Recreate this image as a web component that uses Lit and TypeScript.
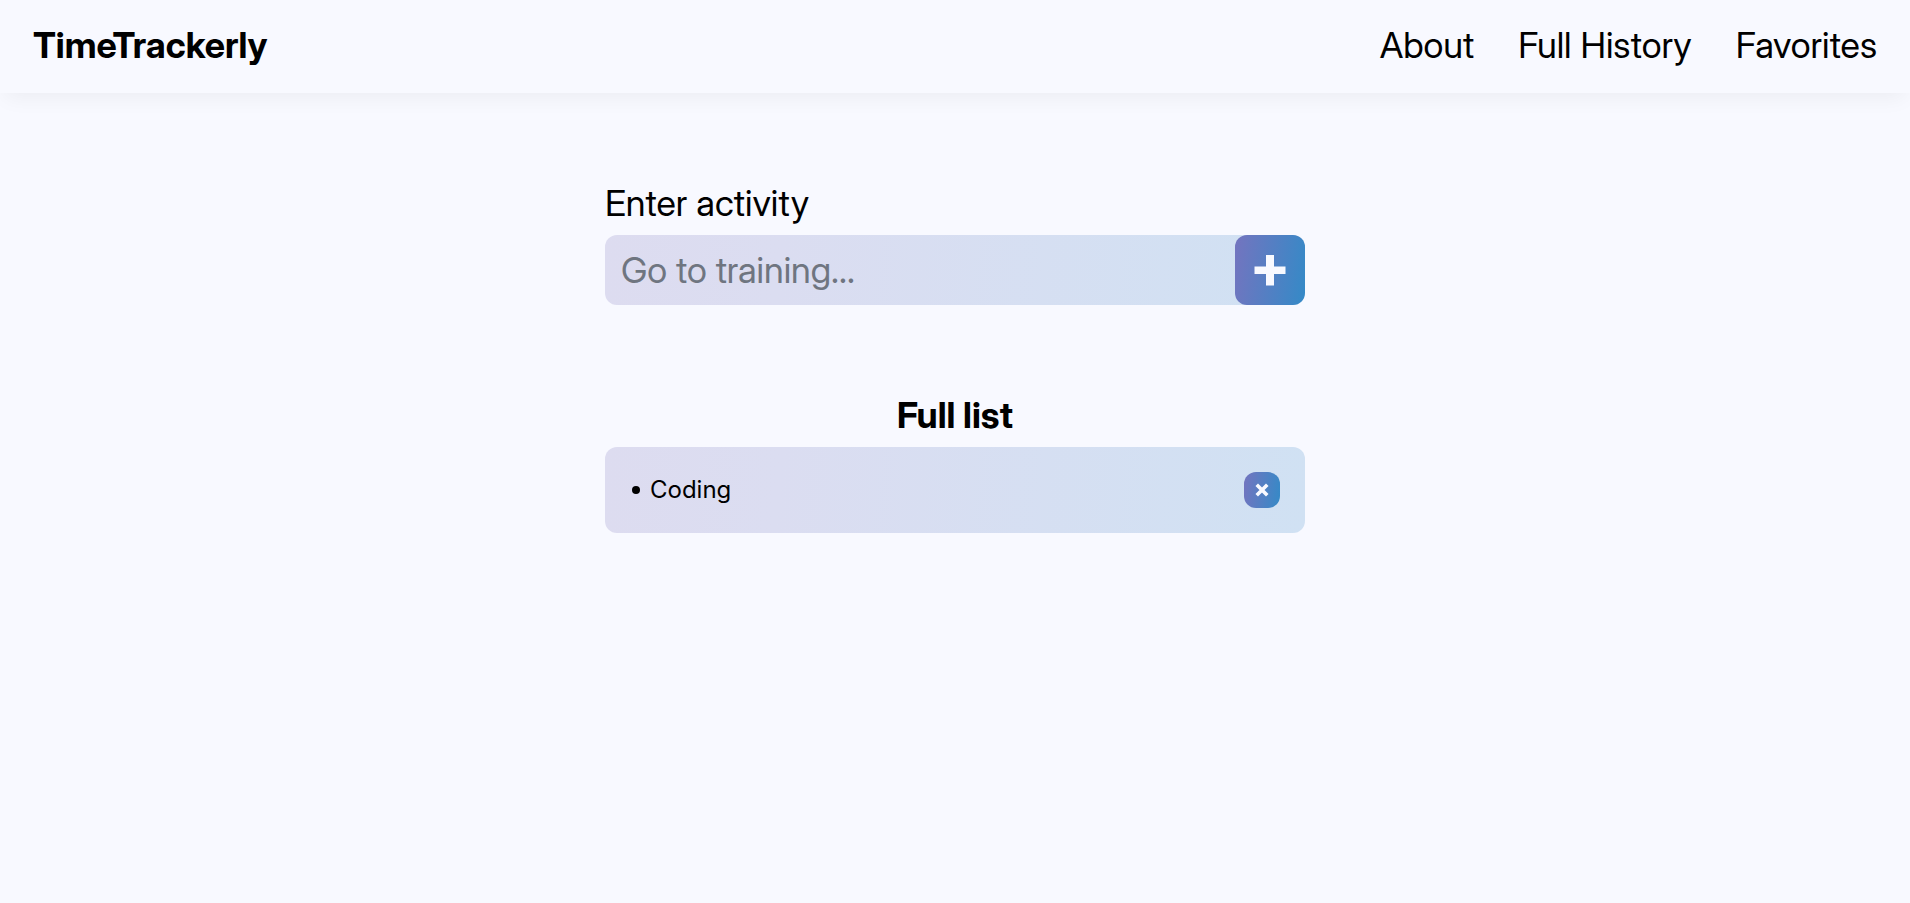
import { LitElement, html, css } from "lit";
import { customElement, state } from "lit/decorators.js";

@customElement("app-root")
export class AppRoot extends LitElement {
  static styles = css`
    :host {
      display: block;
      min-height: 100vh;
      background: #f8f9ff;
      color: #000;
      font-family: "Inter Display", Inter, "Liberation Sans", sans-serif;
      font-size: 36px;
      line-height: 45px;
    }
    * {
      box-sizing: border-box;
    }
    .header {
      display: flex;
      align-items: center;
      justify-content: space-between;
      padding: 23px 33px 25px;
      box-shadow: 0 10px 20px -5px rgba(0, 0, 0, 0.05);
    }
    .logo {
      font-weight: 700;
      color: inherit;
      text-decoration: none;
    }
    .nav {
      display: flex;
      gap: 44px;
    }
    .nav a {
      color: inherit;
      text-decoration: none;
    }
    .main {
      width: 100%;
      max-width: 700px;
      margin: 0 auto;
      padding-top: 88px;
    }
    .label {
      display: block;
      padding-bottom: 9px;
    }
    .field {
      display: flex;
      height: 70px;
      border-radius: 12px;
      background: linear-gradient(95deg, #dddcf0, #dbddf1 25%, #d0e1f3);
    }
    .input {
      flex: 1;
      min-width: 0;
      border: 0;
      padding: 0 16px;
      background: none;
      font: inherit;
      color: inherit;
      outline: none;
    }
    .input::placeholder {
      color: #6f7580;
      opacity: 1;
    }
    .btn {
      display: grid;
      place-items: center;
      flex: none;
      padding: 0;
      border: 0;
      border-radius: 12px;
      background: linear-gradient(98deg, #7474bf, #348ac7);
      color: #f8f9ff;
      cursor: pointer;
    }
    .add {
      width: 70px;
    }
    .remove {
      width: 36px;
      height: 36px;
    }
    .title {
      margin: 88px 0 9px;
      font-size: 36px;
      font-weight: 700;
      text-align: center;
    }
    .list {
      margin: 0;
      padding: 25px;
      list-style: none;
      border-radius: 12px;
      background: linear-gradient(95deg, #dddcf0, #dbddf1 25%, #d0e1f3);
      font-family: Inter, "Liberation Sans", sans-serif;
      font-size: 24px;
      line-height: 36px;
    }
    .item {
      display: flex;
      align-items: center;
      justify-content: space-between;
    }
    .name {
      display: flex;
      align-items: center;
      gap: 10px;
      padding-left: 2px;
    }
    .name::before {
      content: "";
      width: 8px;
      height: 8px;
      border-radius: 50%;
      background: currentColor;
    }
  `;

  @state() private activities = ["Coding"];

  private submit(e: Event) {
    e.preventDefault();
    const input = this.renderRoot.querySelector<HTMLInputElement>("#activity");
    const text = input?.value.trim();
    if (!input || !text) return;
    this.activities = [...this.activities, text];
    input.value = "";
  }

  private remove(index: number) {
    this.activities = this.activities.filter((_, i) => i !== index);
  }

  render() {
    return html`
      <header class="header">
        <a class="logo" href="#">TimeTrackerly</a>
        <nav class="nav">
          <a href="#about">About</a>
          <a href="#history">Full History</a>
          <a href="#favorites">Favorites</a>
        </nav>
      </header>
      <main class="main">
        <form @submit=${this.submit}>
          <label class="label" for="activity">Enter activity</label>
          <div class="field">
            <input class="input" id="activity" type="text" placeholder="Go to training..." autocomplete="off" />
            <button class="btn add" type="submit" aria-label="Add activity">
              <svg width="32" height="32" viewBox="0 0 32 32" fill="currentColor" aria-hidden="true">
                <path d="M12 1h8v11.500h11.500v7.500H20v11.500h-8V20H.5v-7.500H12z" />
              </svg>
            </button>
          </div>
        </form>
        <h2 class="title">Full list</h2>
        <ul class="list">
          ${this.activities.map(
            (name, i) => html`
              <li class="item">
                <span class="name">${name}</span>
                <button class="btn remove" type="button" aria-label="Remove ${name}" @click=${() => this.remove(i)}>
                  <svg width="14" height="14" viewBox="0 0 14 14" aria-hidden="true">
                    <path
                      d="M3 3l8 8M11 3l-8 8"
                      fill="none"
                      stroke="currentColor"
                      stroke-width="3.6"
                      stroke-linecap="square"
                    />
                  </svg>
                </button>
              </li>
            `
          )}
        </ul>
      </main>
    `;
  }
}
